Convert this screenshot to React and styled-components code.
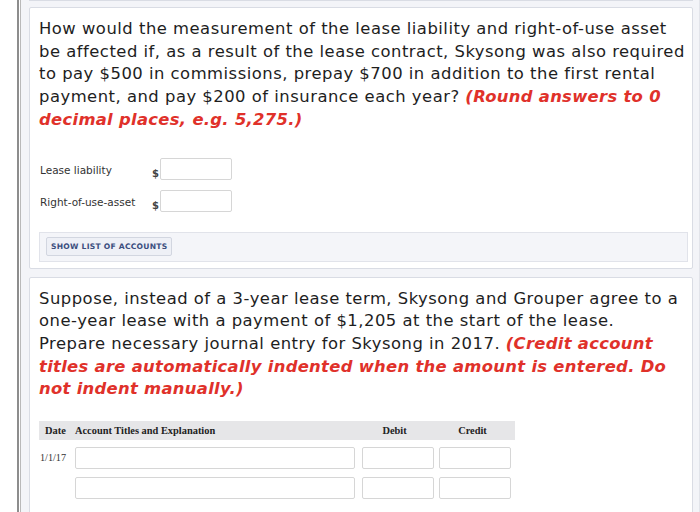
import React from 'react';
import styled, { createGlobalStyle } from 'styled-components';

const GlobalStyle = createGlobalStyle`
    html, body {
        margin: 0;
        padding: 0;
        background: #ffffff;
    }
    body {
        font-family: 'DejaVu Sans', Verdana, sans-serif;
        color: #222;
    }
`;

const Page = styled.div`
    display: flex;
    width: 700px;
    height: 512px;
    overflow: hidden;
    background: #ffffff;
`;

const Gutter = styled.div`
    width: 17px;
    flex-shrink: 0;
`;

const Rail = styled.div`
    width: 1px;
    flex-shrink: 0;
    border-left: 2px solid #8d8d8d;
    border-right: 1px solid #b9b9b9;
`;

const Content = styled.div`
    flex: 1;
    min-width: 0;
    display: flex;
    flex-direction: column;
    gap: 8px;
    padding: 0 6px 0 8px;
    background: #f3f4f8;
    border-right: 1px solid #e2e4ea;
`;

const Panel = styled.section`
    min-width: 0;
    overflow: hidden;
    background: #ffffff;
    border: 1px solid #d9dce4;
    border-radius: 2px;
    padding: ${p => p.$pad || '10px 4px 8px 9px'};
    flex-shrink: 0;
`;

const PrevPanel = styled(Panel)`
    height: 0;
    padding: 0;
    border-top: none;
    margin-bottom: -2px;
`;

const Question = styled.p`
    margin: 0;
    font-size: 16.4px;
    letter-spacing: 0.5px;
    line-height: 22.7px;
    color: #1e1e1e;
    white-space: nowrap;
`;

const Hint = styled.em`
    color: #e0312a;
    font-weight: bold;
    letter-spacing: 0.3px;
`;

const Fields = styled.div`
    display: grid;
    grid-template-columns: 112px 8px 72px;
    row-gap: 10px;
    margin: 26px 0 0 1px;
    align-items: center;
`;

const Label = styled.label`
    font-size: 10.5px;
    color: #333;
    align-self: start;
    padding-top: 6px;
`;

const Dollar = styled.span`
    font-size: 10px;
    font-weight: bold;
    color: #444;
    align-self: end;
    padding-bottom: 1px;
`;

const Box = styled.div`
    height: 22px;
    width: ${p => p.$w || '72px'};
    border: 1px solid #d6d6d6;
    border-radius: 2px;
    background: #fff;
    box-sizing: border-box;
`;

const AccountsBar = styled.div`
    margin-top: 20px;
    background: #f4f5f9;
    border: 1px solid #e1e3ea;
    padding: 4px 6px 5px;
`;

const AccountsButton = styled.button`
    display: block;
    font-family: 'DejaVu Sans', Verdana, sans-serif;
    font-size: 7.6px;
    font-weight: bold;
    color: #3b4e7e;
    letter-spacing: 0.25px;
    background: #eef0f6;
    border: 1px solid #d2d6e0;
    border-radius: 2px;
    padding: 4px;
`;

const Journal = styled.div`
    margin-top: 20px;
    width: 476px;
`;

const JRow = styled.div`
    display: grid;
    grid-template-columns: 36px 280px 79px 77px;
    align-items: ${p => p.$align || 'center'};
    margin-bottom: ${p => p.$mb || '0'};
`;

const HeadRow = styled(JRow)`
    background: #e6e6e8;
    height: 19px;
    font-family: 'Liberation Serif', 'Times New Roman', serif;
    font-weight: bold;
    font-size: 10.4px;
    color: #222;
`;

const HeadCell = styled.div`
    padding-left: ${p => p.$pl || '0'};
    text-align: ${p => p.$center ? 'center' : 'left'};
`;

const DateCell = styled.div`
    font-family: 'Liberation Serif', 'Times New Roman', serif;
    font-size: 10.2px;
    color: #333;
    padding-top: 5px;
    padding-left: 1px;
`;

const BoxCell = styled.div`
    display: flex;
    justify-content: ${p => p.$justify || 'flex-start'};
`;

const rows = [{ date: '1/1/17' }, { date: '' }];

export default function App() {
    return (
        <>
            <GlobalStyle />
            <Page>
                <Gutter />
                <Rail />
                <Content>
                    <PrevPanel />
                    <Panel $pad="10px 4px 6px 9px">
                        <Question>
                            How would the measurement of the lease liability and right-of-use asset<br />
                            be affected if, as a result of the lease contract, Skysong was also required<br />
                            to pay $500 in commissions, prepay $700 in addition to the first rental<br />
                            payment, and pay $200 of insurance each year?{' '}
                            <Hint>(Round answers to 0<br />decimal places, e.g. 5,275.)</Hint>
                        </Question>
                        <Fields>
                            <Label>Lease liability</Label>
                            <Dollar>$</Dollar>
                            <Box />
                            <Label>Right-of-use-asset</Label>
                            <Dollar>$</Dollar>
                            <Box />
                        </Fields>
                        <AccountsBar>
                            <AccountsButton type="button">SHOW LIST OF ACCOUNTS</AccountsButton>
                        </AccountsBar>
                    </Panel>
                    <Panel $pad="10px 4px 8px 9px">
                        <Question>
                            Suppose, instead of a 3-year lease term, Skysong and Grouper agree to a<br />
                            one-year lease with a payment of $1,205 at the start of the lease.<br />
                            Prepare necessary journal entry for Skysong in 2017.{' '}
                            <Hint>(Credit account<br />titles are automatically indented when the amount is entered. Do<br />not indent manually.)</Hint>
                        </Question>
                        <Journal>
                            <HeadRow $mb="7px">
                                <HeadCell $pl="6px">Date</HeadCell>
                                <HeadCell>Account Titles and Explanation</HeadCell>
                                <HeadCell $center>Debit</HeadCell>
                                <HeadCell $center>Credit</HeadCell>
                            </HeadRow>
                            {rows.map((r, i) => (
                                <JRow key={i} $align="start" $mb="8px">
                                    <DateCell>{r.date}</DateCell>
                                    <BoxCell><Box $w="280px" /></BoxCell>
                                    <BoxCell $justify="flex-end"><Box $w="72px" /></BoxCell>
                                    <BoxCell $justify="flex-end"><Box $w="72px" /></BoxCell>
                                </JRow>
                            ))}
                        </Journal>
                    </Panel>
                </Content>
            </Page>
        </>
    );
}
